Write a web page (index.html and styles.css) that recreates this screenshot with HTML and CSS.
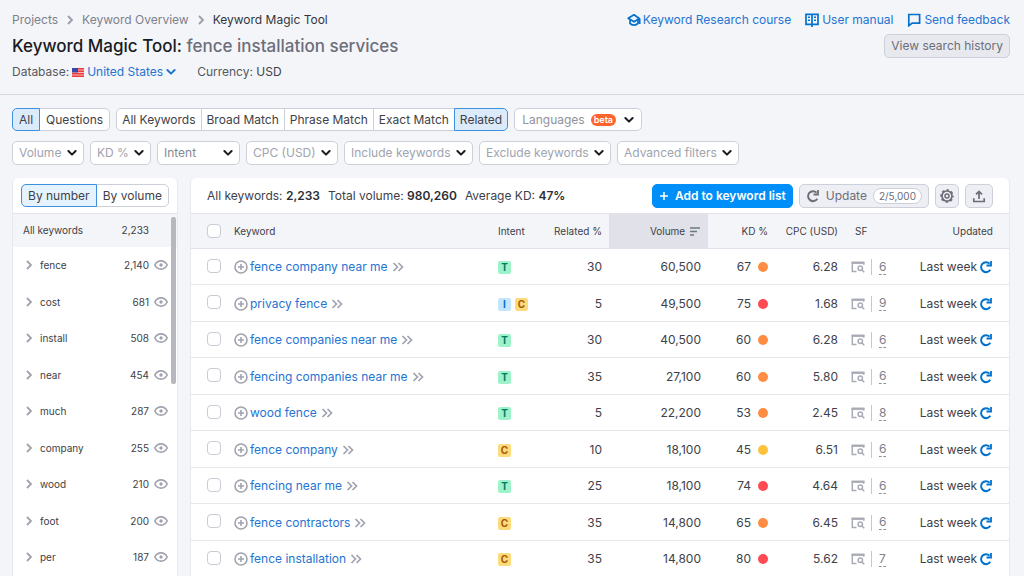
FILE: index.html
```
<!DOCTYPE html>
<html lang="en">
<head>
<meta charset="utf-8">
<title>Keyword Magic Tool</title>
<link rel="stylesheet" href="styles.css">
</head>
<body>
<svg class="sprite" aria-hidden="true">
  <symbol id="chev-right" viewBox="0 0 10 10"><path d="M3 1l4 4-4 4" fill="none" stroke="currentColor" stroke-width="1.8"/></symbol>
  <symbol id="chev-down" viewBox="0 0 10 10"><path d="M1.4 3l3.6 3.6L8.600 3" fill="none" stroke="currentColor" stroke-width="2" stroke-linecap="round" stroke-linejoin="round"/></symbol>
  <symbol id="double" viewBox="0 0 12 10"><path d="M1.500 1l4 4-4 4M6.500 1l4 4-4 4" fill="none" stroke="currentColor" stroke-width="1.700"/></symbol>
  <symbol id="plus-circle" viewBox="0 0 14 14"><circle cx="7" cy="7" r="6" fill="none" stroke="currentColor" stroke-width="1.600"/><path d="M7 4v6M4 7h6" stroke="currentColor" stroke-width="1.600"/></symbol>
  <symbol id="eye" viewBox="0 0 14 10"><path d="M.8 5C2.200 2.200 4.400.9 7 .9S11.800 2.200 13.200 5C11.800 7.800 9.600 9.100 7 9.100S2.200 7.800.8 5z" fill="none" stroke="currentColor" stroke-width="1.600"/><circle cx="7" cy="5" r="1.700" fill="currentColor"/></symbol>
  <symbol id="refresh" viewBox="0 0 14 14"><path d="M11.300 9.800A5 5 0 1 1 10.600 3.600" fill="none" stroke="currentColor" stroke-width="2"/><path d="M12.900 1v5.400H7.500V4.600h3.600V1z" fill="currentColor"/></symbol>
  <symbol id="serp" viewBox="0 0 14 12"><path d="M5.500 10.400H1.300V1.500h11.400v2.300" fill="none" stroke="currentColor" stroke-width="1.500"/><path d="M.6.7h12.800v2.200H.6z" fill="currentColor"/><circle cx="9.300" cy="7.300" r="2.200" fill="none" stroke="currentColor" stroke-width="1.500"/><path d="M10.800 8.800l2.400 2.400" fill="none" stroke="currentColor" stroke-width="1.600"/></symbol>
</svg>

<header class="page-head">
  <div class="head-row">
    <nav class="crumbs" aria-label="Breadcrumb">
      <a href="#">Projects</a>
      <svg class="i10"><use href="#chev-right"/></svg>
      <a href="#">Keyword Overview</a>
      <svg class="i10"><use href="#chev-right"/></svg>
      <span class="current">Keyword Magic Tool</span>
    </nav>
    <div class="help-links">
      <a href="#"><svg class="i14" viewBox="0 0 14 14"><path d="M7 1.800L1.200 5.300 7 8.800l5.300-3.300zM12.700 5.500V11" fill="none" stroke="currentColor" stroke-width="1.700" stroke-linejoin="round"/><path d="M3 7v3.400c2 2.400 6 2.400 8 0V7" fill="none" stroke="currentColor" stroke-width="1.700"/></svg>Keyword Research course</a>
      <a href="#" class="wide"><svg class="i14" viewBox="0 0 14 14"><path d="M1 1.300h12v10H1zM7 1.300V14" fill="none" stroke="currentColor" stroke-width="1.700"/><path d="M3 4.300h2M3 7.300h2M9 4.300h2M9 7.300h2" stroke="currentColor" stroke-width="1.400"/></svg>User manual</a>
      <a href="#" class="wide"><svg class="i14" viewBox="0 0 14 14"><path d="M1.800 1.500h10.800v8.600H5.200L1.800 12.700z" fill="none" stroke="currentColor" stroke-width="1.700"/></svg>Send feedback</a>
    </div>
  </div>
  <div class="head-row">
    <h1>Keyword Magic Tool: <span>fence installation services</span></h1>
    <button class="btn history" type="button">View search history</button>
  </div>
  <div class="head-row meta">
    <div class="database">Database:
      <button class="country" type="button">
        <svg class="flag" viewBox="0 0 12 9"><path fill="#f9b9b9" d="M0 0h12v9H0z"/><path d="M0 .8h12M0 3.200h12M0 5.700h12M0 8.200h12" stroke="#ee3b3e" stroke-width="1.500"/><path fill="#3b47a8" d="M0 0h6v4.500H0z"/></svg>
        United States
        <svg class="i10"><use href="#chev-down"/></svg>
      </button>
    </div>
    <div>Currency: <span class="dark">USD</span></div>
  </div>
</header>

<section class="filters">
  <div class="filter-row">
    <div class="segment">
      <button type="button" class="on" aria-pressed="true">All</button><button type="button">Questions</button>
    </div>
    <div class="segment match">
      <button type="button">All Keywords</button><button type="button">Broad Match</button><button type="button">Phrase Match</button><button type="button">Exact Match</button><button type="button" class="on" aria-pressed="true">Related</button>
    </div>
    <button class="languages" type="button">Languages <span class="beta">beta</span><svg class="i10"><use href="#chev-down"/></svg></button>
  </div>
  <div class="filter-row">
    <div class="pick"><select aria-label="Volume"><option>Volume</option></select><svg class="i10"><use href="#chev-down"/></svg></div>
    <div class="pick"><select aria-label="KD %"><option>KD %</option></select><svg class="i10"><use href="#chev-down"/></svg></div>
    <div class="pick intent"><select aria-label="Intent"><option>Intent</option></select><svg class="i10"><use href="#chev-down"/></svg></div>
    <div class="pick"><select aria-label="CPC (USD)"><option>CPC (USD)</option></select><svg class="i10"><use href="#chev-down"/></svg></div>
    <div class="pick"><select aria-label="Include keywords"><option>Include keywords</option></select><svg class="i10"><use href="#chev-down"/></svg></div>
    <div class="pick"><select aria-label="Exclude keywords"><option>Exclude keywords</option></select><svg class="i10"><use href="#chev-down"/></svg></div>
    <div class="pick"><select aria-label="Advanced filters"><option>Advanced filters</option></select><svg class="i10"><use href="#chev-down"/></svg></div>
  </div>
</section>

<main class="content">
  <aside class="panel groups">
    <div class="bar groups-bar">
      <div class="segment">
        <button type="button" class="on" aria-pressed="true">By number</button><button type="button">By volume</button>
      </div>
    </div>
    <div class="group-all"><span>All keywords</span><span>2,233</span></div>
    <ul class="group-list">
      <li><svg class="i10"><use href="#chev-right"/></svg><span class="name">fence</span><span>2,140</span><svg class="eye"><use href="#eye"/></svg></li>
      <li><svg class="i10"><use href="#chev-right"/></svg><span class="name">cost</span><span>681</span><svg class="eye"><use href="#eye"/></svg></li>
      <li><svg class="i10"><use href="#chev-right"/></svg><span class="name">install</span><span>508</span><svg class="eye"><use href="#eye"/></svg></li>
      <li><svg class="i10"><use href="#chev-right"/></svg><span class="name">near</span><span>454</span><svg class="eye"><use href="#eye"/></svg></li>
      <li><svg class="i10"><use href="#chev-right"/></svg><span class="name">much</span><span>287</span><svg class="eye"><use href="#eye"/></svg></li>
      <li><svg class="i10"><use href="#chev-right"/></svg><span class="name">company</span><span>255</span><svg class="eye"><use href="#eye"/></svg></li>
      <li><svg class="i10"><use href="#chev-right"/></svg><span class="name">wood</span><span>210</span><svg class="eye"><use href="#eye"/></svg></li>
      <li><svg class="i10"><use href="#chev-right"/></svg><span class="name">foot</span><span>200</span><svg class="eye"><use href="#eye"/></svg></li>
      <li><svg class="i10"><use href="#chev-right"/></svg><span class="name">per</span><span>187</span><svg class="eye"><use href="#eye"/></svg></li>
    </ul>
    <div class="scroll-thumb"></div>
  </aside>

  <section class="panel results">
    <div class="bar">
      <div class="totals">
        <span>All keywords: <b>2,233</b></span>
        <span>Total volume: <b>980,260</b></span>
        <span>Average KD: <b>47%</b></span>
      </div>
      <div class="actions">
        <button class="btn primary" type="button"><svg class="i10" viewBox="0 0 10 10"><path d="M5 1v8M1 5h8" stroke="currentColor" stroke-width="1.500"/></svg>Add to keyword list</button>
        <button class="btn update" type="button"><svg class="i14"><use href="#refresh"/></svg>Update<span class="quota">2/5,000</span></button>
        <button class="btn icon" type="button" aria-label="Settings"><svg class="i14" viewBox="0 0 14 14"><circle cx="7" cy="7" r="5" fill="none" stroke="currentColor" stroke-width="1.700"/><circle cx="7" cy="7" r="6" fill="none" stroke="currentColor" stroke-width="1.500" stroke-dasharray="2.600 2.112" stroke-dashoffset="1.300"/><circle cx="7" cy="7" r="2" fill="none" stroke="currentColor" stroke-width="1.500"/></svg></button>
        <button class="btn icon export" type="button" aria-label="Export"><svg class="i14" viewBox="0 0 14 14"><path d="M7 10V2.500M4 5.400l3-3 3 3M1.800 9.300v3.200h10.400V9.300" fill="none" stroke="currentColor" stroke-width="1.700"/></svg></button>
      </div>
    </div>
    <table>
      <colgroup><col class="c-check"><col><col class="c-intent"><col class="c-related"><col class="c-volume"><col class="c-kd"><col class="c-cpc"><col class="c-sf"><col class="c-updated"></colgroup>
      <thead>
        <tr><th class="check"><input type="checkbox" aria-label="Select all"></th><th>Keyword</th><th class="intent-cell">Intent</th><th class="num">Related %</th><th class="num sorted">Volume <svg class="sort" viewBox="0 0 10 9"><path d="M0 1h10M0 4.500h7M0 8h4" stroke="currentColor" stroke-width="1.500"/></svg></th><th class="num">KD %</th><th class="num">CPC (USD)</th><th class="sf sf-head">SF</th><th class="updated">Updated</th></tr>
      </thead>
      <tbody>
        <tr><td class="check"><input type="checkbox" aria-label="Select fence company near me"></td><td><div class="kw"><svg class="i14"><use href="#plus-circle"/></svg><a href="#">fence company near me</a><svg class="dbl"><use href="#double"/></svg></div></td><td class="intent-cell"><span class="tag t">T</span></td><td class="num">30</td><td class="num">60,500</td><td class="num">67<i class="dot orange"></i></td><td class="num">6.28</td><td class="sf"><div class="serp"><svg><use href="#serp"/></svg><a href="#">6</a></div></td><td class="updated"><div>Last week<svg class="i14"><use href="#refresh"/></svg></div></td></tr>
        <tr><td class="check"><input type="checkbox" aria-label="Select privacy fence"></td><td><div class="kw"><svg class="i14"><use href="#plus-circle"/></svg><a href="#">privacy fence</a><svg class="dbl"><use href="#double"/></svg></div></td><td class="intent-cell"><span class="tag i">I</span><span class="tag c">C</span></td><td class="num">5</td><td class="num">49,500</td><td class="num">75<i class="dot red"></i></td><td class="num">1.68</td><td class="sf"><div class="serp"><svg><use href="#serp"/></svg><a href="#">9</a></div></td><td class="updated"><div>Last week<svg class="i14"><use href="#refresh"/></svg></div></td></tr>
        <tr><td class="check"><input type="checkbox" aria-label="Select fence companies near me"></td><td><div class="kw"><svg class="i14"><use href="#plus-circle"/></svg><a href="#">fence companies near me</a><svg class="dbl"><use href="#double"/></svg></div></td><td class="intent-cell"><span class="tag t">T</span></td><td class="num">30</td><td class="num">40,500</td><td class="num">60<i class="dot orange"></i></td><td class="num">6.28</td><td class="sf"><div class="serp"><svg><use href="#serp"/></svg><a href="#">6</a></div></td><td class="updated"><div>Last week<svg class="i14"><use href="#refresh"/></svg></div></td></tr>
        <tr><td class="check"><input type="checkbox" aria-label="Select fencing companies near me"></td><td><div class="kw"><svg class="i14"><use href="#plus-circle"/></svg><a href="#">fencing companies near me</a><svg class="dbl"><use href="#double"/></svg></div></td><td class="intent-cell"><span class="tag t">T</span></td><td class="num">35</td><td class="num">27,100</td><td class="num">60<i class="dot orange"></i></td><td class="num">5.80</td><td class="sf"><div class="serp"><svg><use href="#serp"/></svg><a href="#">6</a></div></td><td class="updated"><div>Last week<svg class="i14"><use href="#refresh"/></svg></div></td></tr>
        <tr><td class="check"><input type="checkbox" aria-label="Select wood fence"></td><td><div class="kw"><svg class="i14"><use href="#plus-circle"/></svg><a href="#">wood fence</a><svg class="dbl"><use href="#double"/></svg></div></td><td class="intent-cell"><span class="tag t">T</span></td><td class="num">5</td><td class="num">22,200</td><td class="num">53<i class="dot orange"></i></td><td class="num">2.45</td><td class="sf"><div class="serp"><svg><use href="#serp"/></svg><a href="#">8</a></div></td><td class="updated"><div>Last week<svg class="i14"><use href="#refresh"/></svg></div></td></tr>
        <tr><td class="check"><input type="checkbox" aria-label="Select fence company"></td><td><div class="kw"><svg class="i14"><use href="#plus-circle"/></svg><a href="#">fence company</a><svg class="dbl"><use href="#double"/></svg></div></td><td class="intent-cell"><span class="tag c">C</span></td><td class="num">10</td><td class="num">18,100</td><td class="num">45<i class="dot yellow"></i></td><td class="num">6.51</td><td class="sf"><div class="serp"><svg><use href="#serp"/></svg><a href="#">6</a></div></td><td class="updated"><div>Last week<svg class="i14"><use href="#refresh"/></svg></div></td></tr>
        <tr><td class="check"><input type="checkbox" aria-label="Select fencing near me"></td><td><div class="kw"><svg class="i14"><use href="#plus-circle"/></svg><a href="#">fencing near me</a><svg class="dbl"><use href="#double"/></svg></div></td><td class="intent-cell"><span class="tag t">T</span></td><td class="num">25</td><td class="num">18,100</td><td class="num">74<i class="dot red"></i></td><td class="num">4.64</td><td class="sf"><div class="serp"><svg><use href="#serp"/></svg><a href="#">6</a></div></td><td class="updated"><div>Last week<svg class="i14"><use href="#refresh"/></svg></div></td></tr>
        <tr><td class="check"><input type="checkbox" aria-label="Select fence contractors"></td><td><div class="kw"><svg class="i14"><use href="#plus-circle"/></svg><a href="#">fence contractors</a><svg class="dbl"><use href="#double"/></svg></div></td><td class="intent-cell"><span class="tag c">C</span></td><td class="num">35</td><td class="num">14,800</td><td class="num">65<i class="dot orange"></i></td><td class="num">6.45</td><td class="sf"><div class="serp"><svg><use href="#serp"/></svg><a href="#">6</a></div></td><td class="updated"><div>Last week<svg class="i14"><use href="#refresh"/></svg></div></td></tr>
        <tr><td class="check"><input type="checkbox" aria-label="Select fence installation"></td><td><div class="kw"><svg class="i14"><use href="#plus-circle"/></svg><a href="#">fence installation</a><svg class="dbl"><use href="#double"/></svg></div></td><td class="intent-cell"><span class="tag c">C</span></td><td class="num">35</td><td class="num">14,800</td><td class="num">80<i class="dot red"></i></td><td class="num">5.62</td><td class="sf"><div class="serp"><svg><use href="#serp"/></svg><a href="#">7</a></div></td><td class="updated"><div>Last week<svg class="i14"><use href="#refresh"/></svg></div></td></tr>
      </tbody>
    </table>
  </section>
</main>
</body>
</html>
```
FILE: styles.css
```
* { box-sizing: border-box; }
body {
  margin: 0;
  height: 100vh;
  overflow: hidden;
  background: #f4f5f9;
  color: #3e4148;
  font: 12px/16px Inter, "Liberation Sans", sans-serif;
}
button, select, input { font: inherit; color: inherit; margin: 0; }
button { cursor: pointer; white-space: nowrap; }
a { color: #2474d2; text-decoration: none; }
svg { flex: none; display: block; }
.sprite { position: absolute; width: 0; height: 0; }
.i10 { width: 10px; height: 10px; }
.i14 { width: 14px; height: 14px; }

.page-head {
  display: flex;
  flex-direction: column;
  padding: 12px 14px 14px 12px;
  border-bottom: 1px solid #d5d7e0;
}
.head-row { display: flex; align-items: center; justify-content: space-between; }
.crumbs { display: flex; align-items: center; gap: 7px; }
.crumbs a { color: #7d818c; }
.crumbs svg { color: #9a9da8; }
.crumbs .current { color: #33363d; }
.help-links { display: flex; gap: 14px; }
.help-links a { display: flex; align-items: center; gap: 2px; }
.help-links .i14 { color: #0071cd; }
.help-links .wide { gap: 3px; }
h1 { margin: 0; font-size: 17px; line-height: 36px; font-weight: 500; color: #191b23; }
h1 span { color: #6c6e79; }
.btn {
  display: flex;
  align-items: center;
  height: 24px;
  padding: 0 6px;
  border: 1px solid #cdcfd9;
  border-radius: 5px;
  background: #eeeff4;
  color: #6c6e79;
}
.history { background: #e8e9ef; }
.meta { justify-content: flex-start; gap: 21px; color: #55585f; }
.meta .dark { color: #3e4148; }
.database, .country { display: flex; align-items: center; gap: 3px; }
.country { padding: 0; border: 0; background: none; color: #2474d2; }
.flag { width: 12px; height: 9px; }

.filters { display: flex; flex-direction: column; gap: 10px; padding: 13px 12px; }
.filter-row { display: flex; gap: 6px; }
.segment { display: flex; }
.segment button {
  height: 23px;
  padding: 0 6px;
  margin-left: -1px;
  border: 1px solid #cdcfd9;
  background: #fff;
}
.match button { padding: 0 5px; }
.segment button:first-child { margin-left: 0; border-radius: 5px 0 0 5px; }
.segment button:last-child { border-radius: 0 5px 5px 0; }
.segment .on { position: relative; border-color: #3b91dd; background: #dcebfa; }
.languages {
  display: flex;
  align-items: center;
  height: 23px;
  padding: 0 7px;
  border: 1px solid #cdcfd9;
  border-radius: 5px;
  background: #fff;
  color: #8f929d;
}
.languages .i10, .pick .i10 { color: #191b23; }
.beta {
  margin: 0 8px 0 6px;
  padding: 0 3px;
  border-radius: 6px;
  background: #ff642d;
  color: #fff;
  font-size: 9px;
  line-height: 12px;
  font-weight: 600;
}
.pick { display: grid; align-items: center; }
.pick select {
  grid-area: 1 / 1;
  appearance: none;
  height: 24px;
  padding: 0 21px 0 6px;
  border: 1px solid #cdcfd9;
  border-radius: 5px;
  background: #fff;
  color: #a0a3b0;
}
.pick .i10 { grid-area: 1 / 1; justify-self: end; margin-right: 7px; pointer-events: none; }
.intent { width: 83px; }
.intent select { color: #858893; }

.content { display: flex; gap: 12px; padding: 0 14px 0 12px; }
.panel { background: #fff; border: 1px solid #e6e8ee; border-top: 0; border-radius: 5px 5px 0 0; }
.bar {
  display: flex;
  align-items: center;
  justify-content: space-between;
  height: 36px;
  padding: 0 16px;
  border-bottom: 1px solid #e0e1e9;
}
.groups { position: relative; flex: 0 0 166px; }
.groups, th { font-size: 10px; }
.groups-bar { padding: 0 8px; font-size: 12px; }
.groups-bar .on { background: #e5f3ff; }
.groups-bar .segment, .groups-bar button { flex: 1 1 auto; }
.group-all {
  display: flex;
  justify-content: space-between;
  padding: 0 28px 0 10px;
  background: #f4f5f9;
  line-height: 33px;
}
.group-list { margin: 0; padding: 0; list-style: none; }
.group-list li { display: flex; align-items: center; height: 36px; padding: 0 9px 0 11px; }
.group-list li:nth-child(even) { height: 37px; }
.group-list svg { color: #a0a2ae; }
.group-list .name { flex: 1; margin-left: 6px; }
.group-list .eye { width: 14px; height: 10px; margin-left: 5px; }
.scroll-thumb {
  position: absolute;
  top: 39px;
  right: 1px;
  width: 5px;
  height: 167px;
  border-radius: 2px;
  background: #b7b8bd;
}

.results { flex: 1; min-width: 0; }
.totals, .actions { display: flex; align-items: center; white-space: nowrap; }
.totals { gap: 8px; }
.totals b { font-weight: 600; color: #2b2e35; }
.actions { gap: 6px; }
.primary { gap: 6px; border-color: #008ff8; background: #008ff8; color: #fff; font-weight: 600; }
.update { gap: 6px; }
.quota {
  padding: 0 5px;
  border: 1px solid #cdcfd9;
  border-radius: 8px;
  background: #fff;
  font-size: 10px;
  line-height: 14px;
}
.icon { padding: 0 4px; }
.export { padding: 0 6px; }

table { width: 100%; table-layout: fixed; border-collapse: separate; border-spacing: 0; }
.c-check { width: 43px; }
.c-intent { width: 50px; }
.c-related { width: 67px; }
.c-volume { width: 99px; }
.c-kd { width: 67px; }
.c-cpc { width: 70px; }
.c-sf { width: 60px; }
.c-updated { width: 104px; }
th, td { padding: 0; text-align: left; white-space: nowrap; border-bottom: 1px solid #e6e8ee; }
th { height: 35px; background: #f4f5f9; font-weight: 400; border-color: #e0e1e9; }
td { height: 36px; padding-top: 1px; }
tbody tr:nth-child(even) td { height: 37px; }
th.num, td.num { text-align: right; padding-right: 7px; }
th.sorted { background: #e0e1e9; }
.sort { display: inline-block; width: 10px; height: 9px; margin: 0 1px 0 2px; vertical-align: -1px; color: #6c7a80; }
.check { padding-left: 16px; }
td.check { padding: 0 0 2px 16px; }
.check input {
  display: block;
  appearance: none;
  width: 14px;
  height: 14px;
  border: 1px solid #c9cbd5;
  border-radius: 4px;
  background: #fff;
}
.kw { display: flex; align-items: center; color: #a0a2ae; }
.kw a { margin: 0 4px 0 2px; }
.dbl { width: 12px; height: 10px; }
.intent-cell { padding-left: 6px; }
.tag {
  display: inline-block;
  width: 13px;
  margin-right: 4px;
  border-radius: 2px;
  font-size: 10px;
  line-height: 13px;
  font-weight: 700;
  text-align: center;
}
.t { background: #9ef2c9; color: #007c65; }
.i { background: #c4e5fe; color: #006dca; }
.c { background: #fcdb7c; color: #a75800; }
.dot { display: inline-block; width: 10px; height: 10px; margin-left: 7px; border-radius: 50%; vertical-align: -1px; }
.orange { background: #ff8c43; }
.red { background: #ff4953; }
.yellow { background: #fdc23c; }
.sf { padding-left: 6px; }
.sf-head { padding-left: 10px; }
.serp { display: flex; align-items: center; }
.serp svg { width: 14px; height: 12px; color: #a9abb6; }
.serp::before { content: ""; order: 1; width: 1px; height: 16px; margin: 0 7px 0 6px; background: #c4c7cf; }
.serp a { order: 2; color: #7d818c; line-height: 14px; border-bottom: 1px dashed #8a8e9b; }
.updated { padding-right: 16px; text-align: right; }
.updated div { display: flex; align-items: center; justify-content: flex-end; gap: 2px; }
.updated svg { color: #0071cd; }
```
